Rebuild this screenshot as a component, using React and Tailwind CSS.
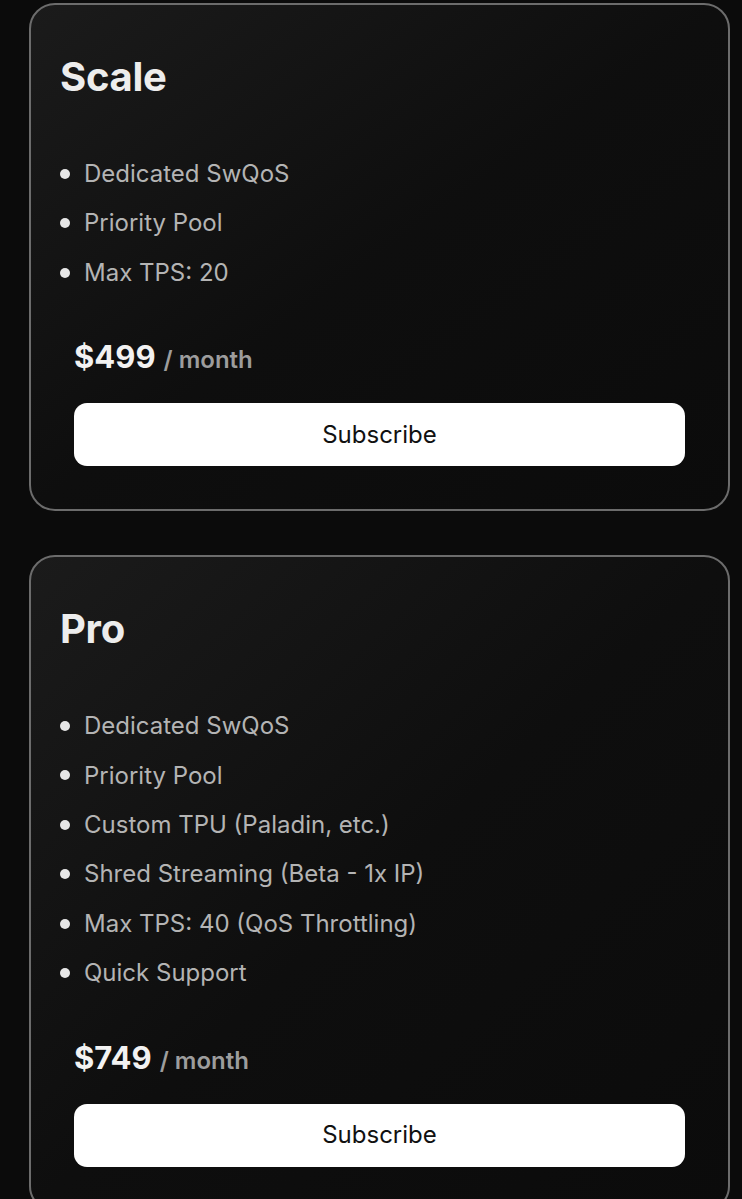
const plans = [
  {
    name: 'Scale',
    features: ['Dedicated SwQoS', 'Priority Pool', 'Max TPS: 20'],
    price: '$499',
  },
  {
    name: 'Pro',
    features: [
      'Dedicated SwQoS',
      'Priority Pool',
      'Custom TPU (Paladin, etc.)',
      'Shred Streaming (Beta - 1x IP)',
      'Max TPS: 40 (QoS Throttling)',
      'Quick Support',
    ],
    price: '$749',
  },
];

const PlanCard = ({ plan }) => (
  <div className="w-[701px] rounded-[26px] border-2 border-[#6c6c6c] bg-gradient-to-br from-[#1b1b1b] via-[#0e0e0e] to-[#0b0b0b] pb-[43px]">
    <div className="pl-[29px] pt-[52px]">
      <h2 className="text-[40px] font-bold leading-none text-[#ededed] tracking-[-0.3px]">{plan.name}</h2>
      <ul className="mt-[52px]">
        {plan.features.map((f) => (
          <li key={f} className="flex items-center text-[24px] leading-[49.4px] text-[#b4b4b4]">
            <span className="mr-[14px] h-[10px] w-[10px] rounded-full bg-[#e6e6e6]" />
            {f}
          </li>
        ))}
      </ul>
    </div>
    <div className="px-[43px] pt-[44px]">
      <div className="flex items-baseline leading-none">
        <span className="text-[31px] font-bold text-[#f2f2f2]">{plan.price}</span>
        <span className="ml-[8px] text-[24px] font-semibold text-[#9d9d9d]">/ month</span>
      </div>
      <button
        type="button"
        className="mt-[31px] flex h-[63px] w-full items-center justify-center rounded-[13px] bg-white text-[24px] text-[#111]"
      >
        Subscribe
      </button>
    </div>
  </div>
);

export default function App() {
  return (
    <div
      className="h-[1199px] overflow-hidden bg-[#0b0b0b] pl-[29px] pt-[3px]"
      style={{ fontFamily: 'Inter, "Noto Sans", sans-serif' }}
    >
      <div className="flex flex-col gap-[44px]">
        {plans.map((p) => (
          <PlanCard key={p.name} plan={p} />
        ))}
      </div>
    </div>
  );
}
